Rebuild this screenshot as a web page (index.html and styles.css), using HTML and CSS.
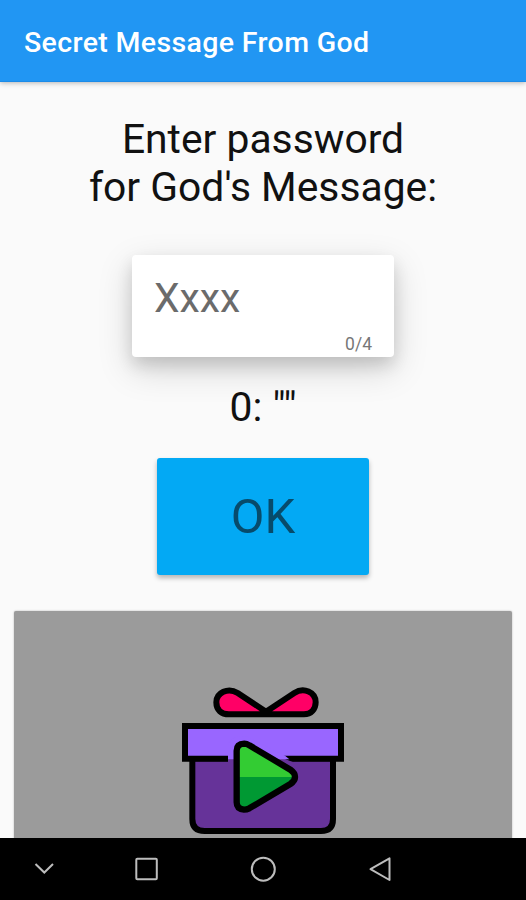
FILE: index.html
```html
<!DOCTYPE html>
<html lang="en">
<head>
<meta charset="utf-8">
<title>Secret Message From God</title>
<link rel="stylesheet" href="styles.css">
</head>
<body>
<div class="screen">
  <header class="appbar"><h1 class="title">Secret Message From God</h1></header>
  <main class="content">
    <p class="prompt">Enter password<br>for God's Message:</p>
    <div class="field">
      <span class="hint">Xxxx</span>
      <span class="counter">0/4</span>
    </div>
    <p class="status">0: ""</p>
    <button class="ok">OK</button>
    <div class="reward">
      <svg class="gift" width="190" height="170" viewBox="0 0 570 510">
        <g stroke="#000" stroke-width="18">
          <path fill="#ff0066" stroke-linejoin="round" d="M288 110L203 54C174 36 139 53 139 82C139 105 154 118 177 118H402C423 118 437 103 437 82C437 51 401 36 373 54Z"/>
          <path fill="#663399" d="M67 250V432Q67 468 104 468H453Q489 468 489 432V250Z"/>
          <path fill="#9966ff" d="M45 153H513V251H45Z"/>
        </g>
        <path d="M264 118L288 98L312 118Z"/>
        <path fill="#663399" d="M174 252H345L376 264H174Z"/>
        <path fill="#9966ff" d="M174 253V211Q180 184 220 184Q235 184 246 192L345 242L358 253Z"/>
        <path fill="#33cc33" d="M202 306V230Q202 196 235 210L361 284Q373 292 374 306Z"/>
        <path fill="#009933" d="M202 306V382Q202 416 235 402L361 328Q373 320 374 306Z"/>
        <path fill="none" stroke="#000" stroke-width="19" d="M200 227Q200 207 223 206Q230 206 238 211L361 284Q375 294 375 306Q375 318 361 327L238 400Q230 404 222 404Q200 402 200 382Z"/>
      </svg>
    </div>
  </main>
  <nav class="navbar">
    <svg width="526" height="61" viewBox="0 0 526 61" fill="none" stroke="#bdbdbd" stroke-width="2">
      <path d="M35.5 26L44.3 34.5L53 26"/>
      <rect x="136.3" y="20.7" width="20.5" height="20.5" rx="1"/>
      <circle cx="263.3" cy="31.2" r="11.5"/>
      <path stroke-linejoin="round" d="M389.5 20.3V42L370.5 31.2Z"/>
    </svg>
  </nav>
</div>
</body>
</html>
```
FILE: styles.css
```css
* { box-sizing: border-box; }
body { margin: 0; font-family: Roboto, sans-serif; background: #fafafa; }
.screen { width: 526px; height: 900px; display: flex; flex-direction: column; overflow: hidden; }
.appbar {
  height: 82px; flex: none; padding: 4px 24px 0; display: flex; align-items: center; z-index: 1;
  background: #2196f3; border-bottom: 1px solid #1c8be8;
  box-shadow: 0 1px 5px rgba(0,0,0,.28);
}
.title { margin: 0; color: #fff; font-size: 28.5px; font-weight: 500; letter-spacing: .36px; white-space: nowrap; }
.content { flex: 1; min-height: 0; display: flex; flex-direction: column; align-items: center; padding-top: 33px; overflow: hidden; }
.prompt, .status { margin: 0; font-size: 40.8px; line-height: 48px; font-weight: 400; color: #111; text-align: center; flex: none; }
.field {
  flex: none; width: 262px; height: 102px; margin-top: 44px; padding: 19px 22px 3px 22px;
  display: flex; flex-direction: column; justify-content: space-between;
  background: #fff; border-radius: 4px;
  box-shadow: 0 12px 34px rgba(0,0,0,.17), 0 8px 16px rgba(0,0,0,.12);
}
.hint { font-size: 40.8px; line-height: 48px; font-weight: 400; color: #6b6b6b; }
.counter { align-self: flex-end; font-size: 17.5px; line-height: 20px; font-weight: 400; color: #777; }
.status { margin-top: 26px; }
.ok {
  flex: none; width: 212px; height: 117px; margin-top: 27px; padding: 0; border: 0; border-radius: 3px;
  background: #03a9f4; color: #074b6b; font: 400 49px/117px Roboto, sans-serif;
  box-shadow: 0 3px 5px rgba(0,0,0,.28);
}
.reward {
  flex: none; width: 498px; height: 300px; margin-top: 36px; padding: 64px 0 0 156px;
  background: #9b9b9b; border-radius: 2px; box-shadow: 0 0 2px rgba(0,0,0,.3);
}
.gift { display: block; }
.navbar { flex: none; height: 62px; background: #000; }
.navbar svg { display: block; }
```
